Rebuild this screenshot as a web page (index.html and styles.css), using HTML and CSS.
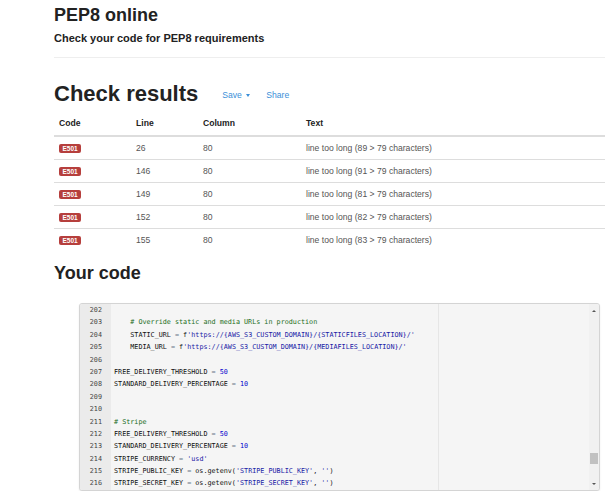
FILE: index.html
```html
<!DOCTYPE html>
<html lang="en">
<head>
<meta charset="utf-8">
<title>PEP8 online</title>
<link rel="stylesheet" href="styles.css">
</head>
<body>
<div class="page">
  <h1 class="title">PEP8 online</h1>
  <p class="subtitle">Check your code for PEP8 requirements</p>
  <hr class="rule">

  <div class="results-head">
    <h2 class="h2">Check results</h2>
    <a class="link save">Save <span class="caret"></span></a>
    <a class="link share">Share</a>
  </div>

  <table class="results">
    <thead>
      <tr><th class="c-code">Code</th><th class="c-line">Line</th><th class="c-col">Column</th><th>Text</th></tr>
    </thead>
    <tbody>
      <tr><td><span class="badge">E501</span></td><td>26</td><td>80</td><td>line too long (89 &gt; 79 characters)</td></tr>
      <tr><td><span class="badge">E501</span></td><td>146</td><td>80</td><td>line too long (91 &gt; 79 characters)</td></tr>
      <tr><td><span class="badge">E501</span></td><td>149</td><td>80</td><td>line too long (81 &gt; 79 characters)</td></tr>
      <tr><td><span class="badge">E501</span></td><td>152</td><td>80</td><td>line too long (82 &gt; 79 characters)</td></tr>
      <tr><td><span class="badge">E501</span></td><td>155</td><td>80</td><td>line too long (83 &gt; 79 characters)</td></tr>
    </tbody>
  </table>

  <h2 class="h2 code-title">Your code</h2>

  <div class="editor">
    <div class="gutter">
      <div class="ln">202</div><div class="ln">203</div><div class="ln">204</div><div class="ln">205</div><div class="ln">206</div><div class="ln">207</div><div class="ln">208</div><div class="ln">209</div><div class="ln">210</div><div class="ln">211</div><div class="ln">212</div><div class="ln">213</div><div class="ln">214</div><div class="ln">215</div><div class="ln">216</div>
    </div>
    <div class="code">
      <div class="ln"> </div>
      <div class="ln">    <span class="cm"># Override static and media URLs in production</span></div>
      <div class="ln">    STATIC_URL <span class="op">=</span> f<span class="st">'https://{AWS_S3_CUSTOM_DOMAIN}/{STATICFILES_LOCATION}/'</span></div>
      <div class="ln">    MEDIA_URL <span class="op">=</span> f<span class="st">'https://{AWS_S3_CUSTOM_DOMAIN}/{MEDIAFILES_LOCATION}/'</span></div>
      <div class="ln"> </div>
      <div class="ln">FREE_DELIVERY_THRESHOLD <span class="op">=</span> <span class="nu">50</span></div>
      <div class="ln">STANDARD_DELIVERY_PERCENTAGE <span class="op">=</span> <span class="nu">10</span></div>
      <div class="ln"> </div>
      <div class="ln"> </div>
      <div class="ln"><span class="cm"># Stripe</span></div>
      <div class="ln">FREE_DELIVERY_THRESHOLD <span class="op">=</span> <span class="nu">50</span></div>
      <div class="ln">STANDARD_DELIVERY_PERCENTAGE <span class="op">=</span> <span class="nu">10</span></div>
      <div class="ln">STRIPE_CURRENCY <span class="op">=</span> <span class="st">'usd'</span></div>
      <div class="ln">STRIPE_PUBLIC_KEY <span class="op">=</span> os.getenv(<span class="st">'STRIPE_PUBLIC_KEY'</span>, <span class="st">''</span>)</div>
      <div class="ln">STRIPE_SECRET_KEY <span class="op">=</span> os.getenv(<span class="st">'STRIPE_SECRET_KEY'</span>, <span class="st">''</span>)</div>
    </div>
    <div class="scrollbar">
      <span class="arrow up"></span>
      <span class="thumb"></span>
      <span class="track-fill"></span>
      <span class="arrow down"></span>
    </div>
  </div>
</div>
</body>
</html>
```

FILE: styles.css
```css
html, body {
  margin: 0;
  padding: 0;
  background: #fff;
  overflow: hidden;
}

body {
  font-family: "Liberation Sans", Arial, sans-serif;
  color: #333;
}

.page {
  padding-left: 54px;
}

.title {
  margin: 5px 0 0;
  font-size: 18px;
  line-height: 20px;
  font-weight: bold;
  color: #222;
}

.subtitle {
  margin: 6px 0 0;
  font-size: 11px;
  line-height: 14px;
  font-weight: bold;
  color: #222;
}

.rule {
  margin: 12px 0 0;
  border: 0;
  border-top: 1px solid #eee;
  height: 0;
}

.results-head {
  display: flex;
  align-items: center;
  margin-top: 23px;
}

.h2 {
  margin: 0;
  font-size: 22px;
  line-height: 26px;
  font-weight: bold;
  color: #222;
}

.link {
  font-size: 8.6px;
  line-height: 11px;
  padding-top: 2px;
  color: #3b8fd8;
  text-decoration: none;
}

.save {
  margin-left: 24px;
}

.share {
  margin-left: 16px;
}

.caret {
  display: inline-block;
  width: 0;
  height: 0;
  margin-left: 2px;
  vertical-align: 1px;
  border-left: 2.5px solid transparent;
  border-right: 2.5px solid transparent;
  border-top: 3px solid #3b8fd8;
}

.results {
  margin-top: 5px;
  width: 100%;
  border-collapse: separate;
  border-spacing: 0;
  font-size: 8.6px;
  line-height: 11px;
}

.results th {
  text-align: left;
  font-weight: bold;
  color: #222;
  padding: 6px 5px;
  border-bottom: 2px solid #ddd;
}

.results td {
  padding: 5.5px 5px;
  border-bottom: 1px solid #ddd;
  color: #555;
}

.results tbody tr:last-child td {
  border-bottom: 0;
}

.c-code { width: 67px; }
.c-line { width: 57px; }
.c-col { width: 93px; }

.badge {
  display: inline-block;
  background: #b63f3d;
  color: #fff;
  font-size: 6.5px;
  font-weight: bold;
  line-height: 9px;
  padding: 0 3.5px;
  border-radius: 2px;
  vertical-align: middle;
}

.code-title {
  font-size: 18px;
  line-height: 20px;
  margin-top: 12px;
}

.editor {
  display: flex;
  margin: 20px 0 0 25px;
  width: 519px;
  height: 186px;
  border: 1px solid #d4d4d4;
  border-radius: 3px;
  box-shadow: 0 1px 2px rgba(0, 0, 0, 0.08);
  background: #f5f5f5;
  overflow: hidden;
  font-family: "DejaVu Sans Mono", "Liberation Mono", monospace;
  font-size: 6.75px;
}

.ln {
  height: 12.4px;
  line-height: 12.4px;
  white-space: pre;
}

.gutter {
  width: 22px;
  padding-right: 9px;
  background: #ebebeb;
  color: #444;
  text-align: right;
}

.code {
  flex: 1;
  padding-left: 3px;
  color: #111;
  background-image: linear-gradient(to right, transparent 327px, #e6e6e6 327px, #e6e6e6 328px, transparent 328px);
}

.cm { color: #236e24; }
.st { color: #1a1aa6; }
.nu { color: #0000cd; }
.op { color: #687687; }

.scrollbar {
  width: 10px;
  display: flex;
  flex-direction: column;
  align-items: center;
  background: #f1f1f1;
}

.arrow {
  width: 0;
  height: 0;
  border-left: 2px solid transparent;
  border-right: 2px solid transparent;
}

.arrow.up {
  margin-top: 6px;
  border-bottom: 2px solid #555;
}

.arrow.down {
  margin-bottom: 5px;
  border-top: 2px solid #555;
}

.thumb {
  margin-top: 141px;
  width: 8px;
  height: 11px;
  background: #c1c1c1;
}

.track-fill {
  flex: 1;
}
```
